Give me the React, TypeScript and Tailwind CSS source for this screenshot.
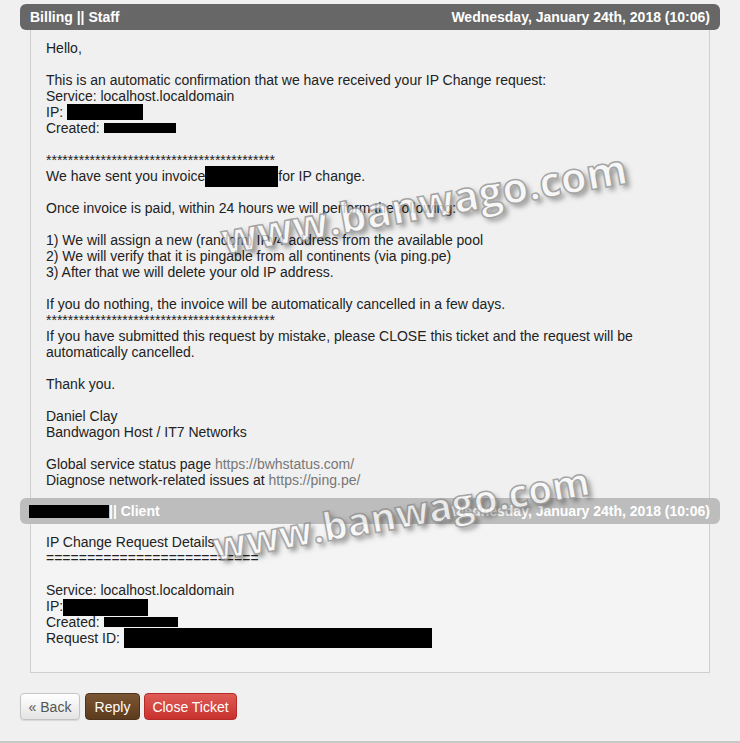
import React from "react";

const Black: React.FC<{ className: string }> = ({ className }) => (
  <span className={`inline-block bg-black ${className}`} />
);

const Watermark: React.FC<{ className: string }> = ({ className }) => (
  <div
    className={`pointer-events-none absolute whitespace-nowrap font-['Open_Sans',sans-serif] font-bold text-[#fafafa] opacity-75 [-webkit-text-stroke:1.5px_#8c8c8c] [text-shadow:3px_4px_5px_rgba(0,0,0,0.5)] ${className}`}
  >
    www.banwago.com
  </div>
);

const App: React.FC = () => {
  return (
    <div className="relative h-[743px] overflow-hidden border-b-2 border-[#c8c8c8] bg-[#f0f0f0] px-5 pt-[4px] font-['Liberation_Sans',Arial,sans-serif] text-[14px] leading-4 text-[#222]">
      {/* staff reply */}
      <div className="flex h-[26px] items-center justify-between rounded-md bg-[#676767] px-[10px] font-bold text-white">
        <span>Billing || Staff</span>
        <span>Wednesday, January 24th, 2018 (10:06)</span>
      </div>
      <div className="mx-[10px] border-x border-[#cfcfcf] px-[15px] pt-[10px] pb-[10px]">
        <p>Hello,</p>
        <br />
        <p>This is an automatic confirmation that we have received your IP Change request:</p>
        <p>Service: localhost.localdomain</p>
        <p>
          IP: <Black className="h-4 w-[76px] align-[-3px]" />
        </p>
        <p>
          Created: <Black className="h-[10px] w-[72px] align-baseline" />
        </p>
        <br />
        <p>******************************************</p>
        <p>
          We have sent you invoice
          <Black className="-my-[3px] h-[21px] w-[73px] align-[-3px]" />
          for IP change.
        </p>
        <br />
        <p>Once invoice is paid, within 24 hours we will perform the following:</p>
        <br />
        <p>1) We will assign a new (random) IPv4 address from the available pool</p>
        <p>2) We will verify that it is pingable from all continents (via ping.pe)</p>
        <p>3) After that we will delete your old IP address.</p>
        <br />
        <p>If you do nothing, the invoice will be automatically cancelled in a few days.</p>
        <p>******************************************</p>
        <p>
          If you have submitted this request by mistake, please CLOSE this ticket and the request will be
          automatically cancelled.
        </p>
        <br />
        <p>Thank you.</p>
        <br />
        <p>Daniel Clay</p>
        <p>Bandwagon Host / IT7 Networks</p>
        <br />
        <p>
          Global service status page <a className="text-[#777]">https://bwhstatus.com/</a>
        </p>
        <p>
          Diagnose network-related issues at <a className="text-[#777]">https://ping.pe/</a>
        </p>
      </div>

      {/* client reply */}
      <div className="flex h-[26px] items-center justify-between rounded-md bg-[#bdbdbd] pr-[10px] pl-[9px] font-bold text-white">
        <span className="flex items-center">
          <Black className="h-[13px] w-[80px]" />
          || Client
        </span>
        <span>Wednesday, January 24th, 2018 (10:06)</span>
      </div>
      <div className="mx-[10px] border-x border-b border-[#cfcfcf] bg-[#f4f4f4] px-[15px] pt-[10px] pb-[26px]">
        <p>IP Change Request Details</p>
        <p>==========================</p>
        <br />
        <p>Service: localhost.localdomain</p>
        <p>
          IP:
          <Black className="-mb-[2px] h-[17px] w-[85px] align-[-3px]" />
        </p>
        <p>
          Created: <Black className="h-[10px] w-[74px] align-baseline" />
        </p>
        <p>
          Request ID: <Black className="-my-[2px] h-[20px] w-[308px] align-[-3px]" />
        </p>
      </div>

      <div className="mt-5 flex gap-[4px]">
        <button className="h-[27px] w-[60px] rounded border border-[#c4c4c4] bg-linear-to-b from-white to-[#e4e4e4] text-[#555] shadow-[0_1px_1px_rgba(0,0,0,0.1)]">
          « Back
        </button>
        <button className="ml-[1px] h-[27px] w-[55px] rounded border border-[#4e321a] bg-linear-to-b from-[#7b5533] to-[#5c3c1e] text-white">
          Reply
        </button>
        <button className="h-[27px] w-[93px] rounded border border-[#b52b27] bg-linear-to-b from-[#df5a56] to-[#c8312d] text-white">
          Close Ticket
        </button>
      </div>

      <Watermark className="top-[203px] left-[424px] -translate-x-1/2 -translate-y-1/2 -rotate-[10deg] text-[42px]" />
      <Watermark className="top-[513px] left-[401px] -translate-x-1/2 -translate-y-1/2 -rotate-[10deg] text-[39px]" />
    </div>
  );
};

export default App;
